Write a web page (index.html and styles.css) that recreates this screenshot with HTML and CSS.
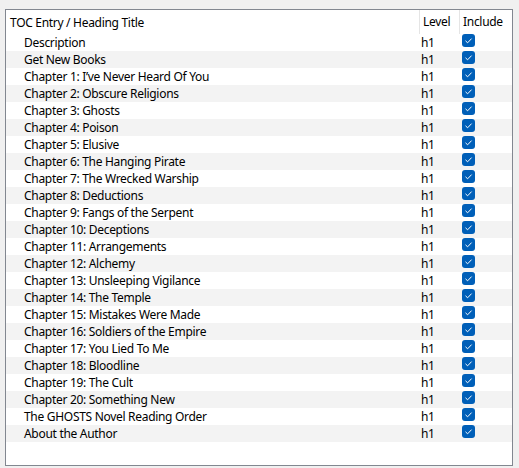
FILE: index.html
```html
<!DOCTYPE html>
<html>
<head>
<meta charset="utf-8">
<link rel="stylesheet" href="styles.css">
</head>
<body>
<div class="panel">
  <div class="row head">
    <div class="c-title">TOC Entry / Heading Title</div>
    <div class="c-level">Level</div>
    <div class="c-inc">Include</div>
  </div>
  <div class="rows" id="rows"></div>
</div>
<script src="app.js"></script>
</body>
</html>
```

FILE: styles.css
```css
html, body { margin: 0; padding: 0; }
body {
  background: #f0f0f0;
  width: 519px;
  height: 468px;
  overflow: hidden;
  font-family: "Noto Sans", "Open Sans", sans-serif;
  font-size: 12px;
  letter-spacing: -0.3px;
  color: #000;
}
.panel {
  margin: 9px 0 0 5px;
  width: 506px;
  height: 455px;
  border: 1px solid #828790;
  background: #fff;
  overflow: hidden;
}
.row {
  display: grid;
  grid-template-columns: 413px 40px 53px;
  height: 17px;
  align-items: center;
  white-space: nowrap;
}
.row.head { height: 24px; align-items: center; }
.head .c-title { padding-left: 4px; }
.head .c-level { border-left: 1px solid #e5e5e5; height: 24px; line-height: 24px; padding-left: 3px; }
.head .c-inc { border-left: 1px solid #e5e5e5; height: 24px; line-height: 24px; padding-left: 3px; }
.rows .row .c-title { padding-left: 18px; }
.rows .row .c-level { padding-left: 2px; }
.rows .row .c-inc { padding-left: 3px; display: flex; align-items: flex-start; height: 17px; }
.rows .row:nth-child(even) { background: #f3f3f3; }
.chk { display: block; width: 13px; height: 13px; margin-top: 0; }
```

FILE: app.js
```js
const titles = [
  "Description","Get New Books","Chapter 1: I\u2019ve Never Heard Of You","Chapter 2: Obscure Religions",
  "Chapter 3: Ghosts","Chapter 4: Poison","Chapter 5: Elusive","Chapter 6: The Hanging Pirate",
  "Chapter 7: The Wrecked Warship","Chapter 8: Deductions","Chapter 9: Fangs of the Serpent",
  "Chapter 10: Deceptions","Chapter 11: Arrangements","Chapter 12: Alchemy","Chapter 13: Unsleeping Vigilance",
  "Chapter 14: The Temple","Chapter 15: Mistakes Were Made","Chapter 16: Soldiers of the Empire",
  "Chapter 17: You Lied To Me","Chapter 18: Bloodline","Chapter 19: The Cult","Chapter 20: Something New",
  "The GHOSTS Novel Reading Order","About the Author"
];
const box = '<svg class="chk" viewBox="0 0 13 13"><rect x="0" y="0" width="13" height="13" rx="3" fill="#005fb8"/><polyline points="3.5,6.8 5.6,8.8 9.6,4.6" fill="none" stroke="#fff" stroke-width="1"/></svg>';
const rows = document.getElementById('rows');
rows.innerHTML = titles.map(t =>
  '<div class="row"><div class="c-title"></div><div class="c-level">h1</div><div class="c-inc">' + box + '</div></div>'
).join('');
rows.querySelectorAll('.c-title').forEach((el, i) => { el.textContent = titles[i]; });
```
